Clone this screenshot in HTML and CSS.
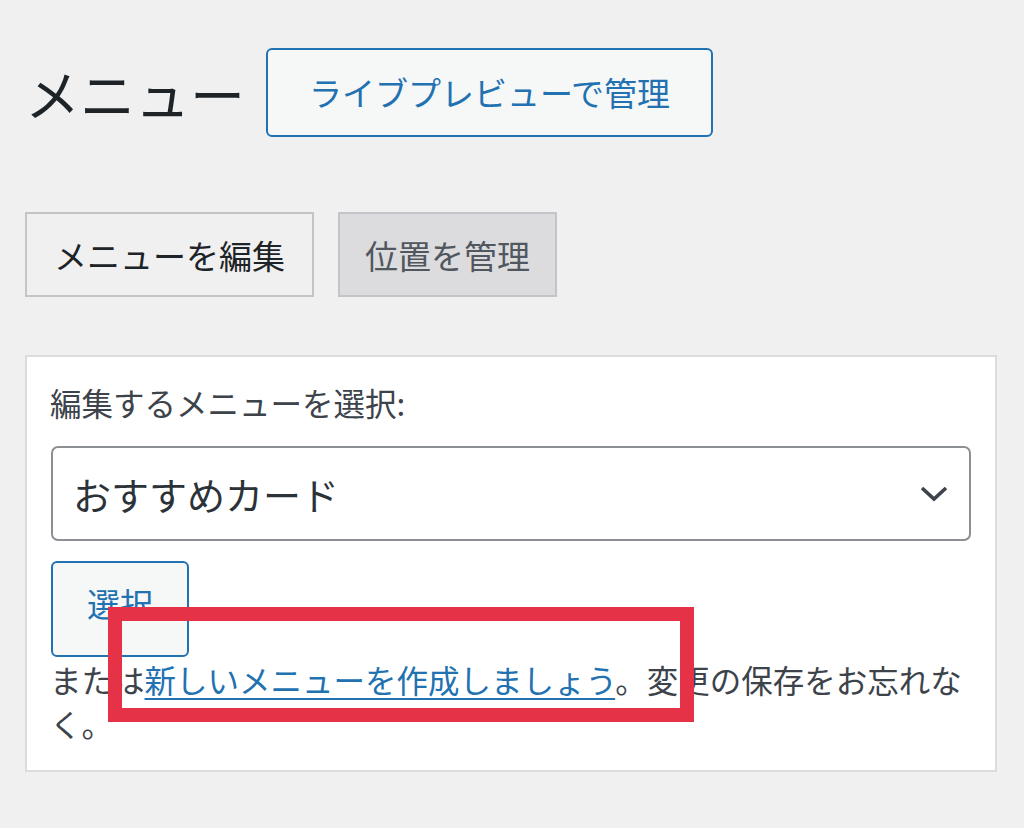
FILE: index.html
```html
<html>
    <head>
        <title>メニュー</title>
        <link rel="stylesheet" href="styles.css">
    </head>
    <body>
        <div class="wrap">
            <div class="head">
                <h1>メニュー</h1>
                <button class="btn btn-blue live">ライブプレビューで管理</button>
            </div>
            <div class="tabs">
                <span class="tab">メニューを編集</span>
                <span class="tab active">位置を管理</span>
            </div>
            <div class="panel">
                <label class="label" for="menu">編集するメニューを選択:</label>
                <div class="select" id="menu">
                    <span>おすすめカード</span>
                    <svg width="30" height="18" viewBox="0 0 30 18"><path d="M3 3 L15 14 L27 3" fill="none" stroke="#3c434a" stroke-width="3.6"/></svg>
                </div>
                <button class="btn btn-blue pick">選択</button>
                <p class="note">または<a href="#">新しいメニューを作成しましょう</a>。変更の保存をお忘れなく。</p>
                <div class="mark"></div>
            </div>
        </div>
    </body>
</html>
```

FILE: styles.css
```css
body {
    margin: 0;
    background-color: #f0f0f1;
    color: #1d2327;
    font-family: "Noto Sans CJK JP", "Noto Sans", sans-serif;
}
.wrap {
    padding: 48px 27px 0 25px;
}
.head {
    display: flex;
    align-items: center;
    gap: 21px;
}
h1 {
    margin: 0;
    font-size: 55px;
    font-weight: 400;
    line-height: 1;
    color: #1d2327;
}
.btn {
    font-family: inherit;
    font-size: 33px;
    line-height: 1;
    cursor: pointer;
}
.btn-blue {
    background-color: #f6f7f7;
    color: #2271b1;
    border: 2px solid #2271b1;
    border-radius: 6px;
}
.live {
    height: 89px;
    padding: 0 41px;
}
.tabs {
    display: flex;
    gap: 24px;
    margin-top: 75px;
}
.tab {
    display: flex;
    align-items: center;
    height: 81px;
    padding: 0 27px;
    font-size: 33px;
    border: 2px solid #c3c4c7;
    background-color: #f0f0f1;
    color: #1d2327;
}
.tab.active {
    padding: 0 25px;
    background-color: #dcdcde;
    color: #50575e;
    border-color: #c3c4c7;
}
.panel {
    position: relative;
    margin-top: 58px;
    padding: 23px 24px 25px 23px;
    background-color: #fff;
    border: 2px solid #dcdcde;
}
.label {
    display: block;
    font-size: 31.5px;
    line-height: 44px;
    color: #3c434a;
}
.select {
    display: flex;
    align-items: center;
    justify-content: space-between;
    height: 91px;
    margin: 22px 0 0 1px;
    padding: 0 20px 0 20px;
    border: 2px solid #8c8f94;
    border-radius: 7px;
    font-size: 38px;
    color: #2c3338;
}
.pick {
    display: block;
    width: 138px;
    height: 96px;
    margin: 20px 0 0 1px;
    padding-bottom: 12px;
}
.note {
    margin: 0;
    font-size: 31.5px;
    line-height: 44px;
    color: #3c434a;
}
.note a {
    color: #2271b1;
    text-decoration: underline;
    text-decoration-thickness: 2px;
    text-underline-offset: 5px;
}
.mark {
    position: absolute;
    left: 81px;
    top: 250px;
    width: 558px;
    height: 87px;
    border: 14px solid #e63246;
}
```
